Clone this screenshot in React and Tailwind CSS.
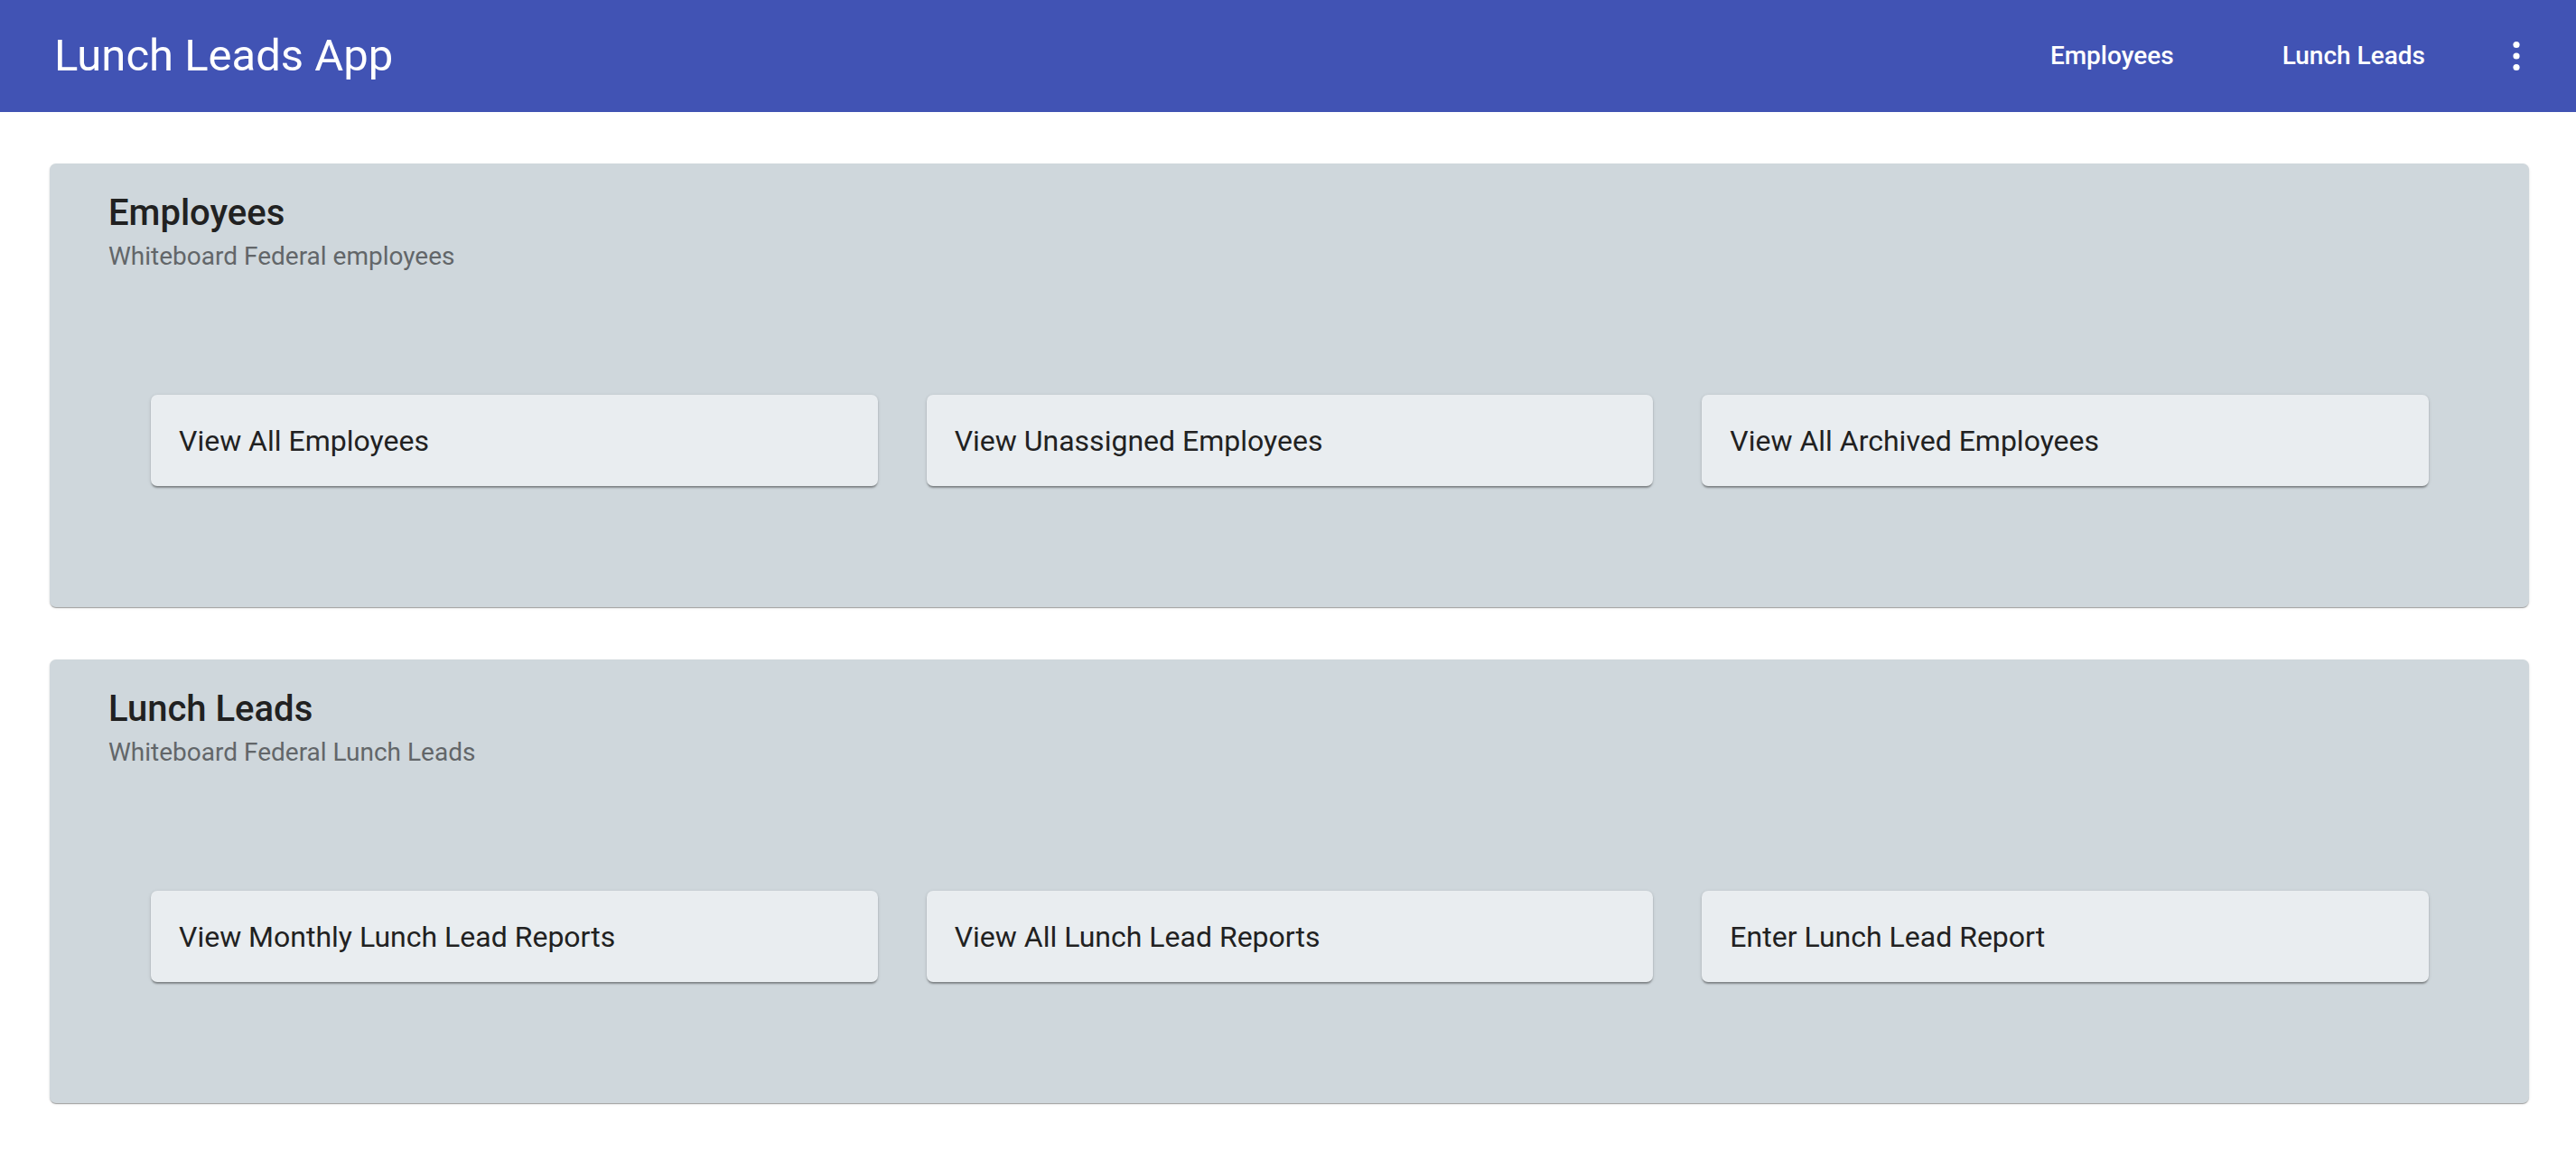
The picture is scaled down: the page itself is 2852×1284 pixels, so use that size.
import React from 'react';

const sections = [
  {
    title: 'Employees',
    subtitle: 'Whiteboard Federal employees',
    links: ['View All Employees', 'View Unassigned Employees', 'View All Archived Employees'],
  },
  {
    title: 'Lunch Leads',
    subtitle: 'Whiteboard Federal Lunch Leads',
    links: ['View Monthly Lunch Lead Reports', 'View All Lunch Lead Reports', 'Enter Lunch Lead Report'],
  },
];

function Kebab() {
  return (
    <svg width="14" height="40" viewBox="0 0 14 40" fill="white">
      <circle cx="7" cy="7.5" r="3.6" />
      <circle cx="7" cy="20" r="3.6" />
      <circle cx="7" cy="32.5" r="3.6" />
    </svg>
  );
}

function Section({ title, subtitle, links }) {
  return (
    <section className="rounded-[7px] bg-[#cfd7dc] pt-[31px] pb-[134px] shadow-[0_2px_1px_-1px_rgba(0,0,0,0.2),0_1px_1px_0_rgba(0,0,0,0.14),0_1px_3px_0_rgba(0,0,0,0.12)]">
      {/* Header */}
      <div className="px-[65px]">
        <h2 className="text-[40px] leading-[48px] font-medium text-[#212121]">{title}</h2>
        <p className="mt-[6px] text-[28px] leading-[36px] text-[#626669]">{subtitle}</p>
      </div>

      {/* Links */}
      <div className="mt-[135px] pl-[112px] pr-[111px] grid grid-cols-3 gap-[54px]">
        {links.map((label) => (
          <button
            key={label}
            className="h-[101px] rounded-[7px] bg-[#e9edf0] px-[31px] text-left text-[32px] text-[#212121] shadow-[0_3px_2px_-1px_rgba(0,0,0,0.28),0_1px_2px_0_rgba(0,0,0,0.14),0_1px_4px_0_rgba(0,0,0,0.1)]"
          >
            {label}
          </button>
        ))}
      </div>
    </section>
  );
}

export default function App() {
  return (
    <div className="min-h-screen bg-white font-['Roboto',sans-serif]">
      {/* Toolbar */}
      <header className="h-[124px] bg-[#4153b4] flex items-center pl-[60px] pr-[59px] text-white">
        <h1 className="text-[49px] leading-none -mt-[2px]">Lunch Leads App</h1>
        <div className="ml-auto flex items-center">
          <a className="text-[28px] font-medium">Employees</a>
          <a className="ml-[120px] text-[28px] font-medium">Lunch Leads</a>
          <button className="ml-[94px] flex items-center justify-center">
            <Kebab />
          </button>
        </div>
      </header>

      {/* Content */}
      <main className="pl-[55px] pr-[52px] pt-[57px] pb-[62px] flex flex-col gap-[58px]">
        {sections.map((s) => (
          <Section key={s.title} {...s} />
        ))}
      </main>
    </div>
  );
}
